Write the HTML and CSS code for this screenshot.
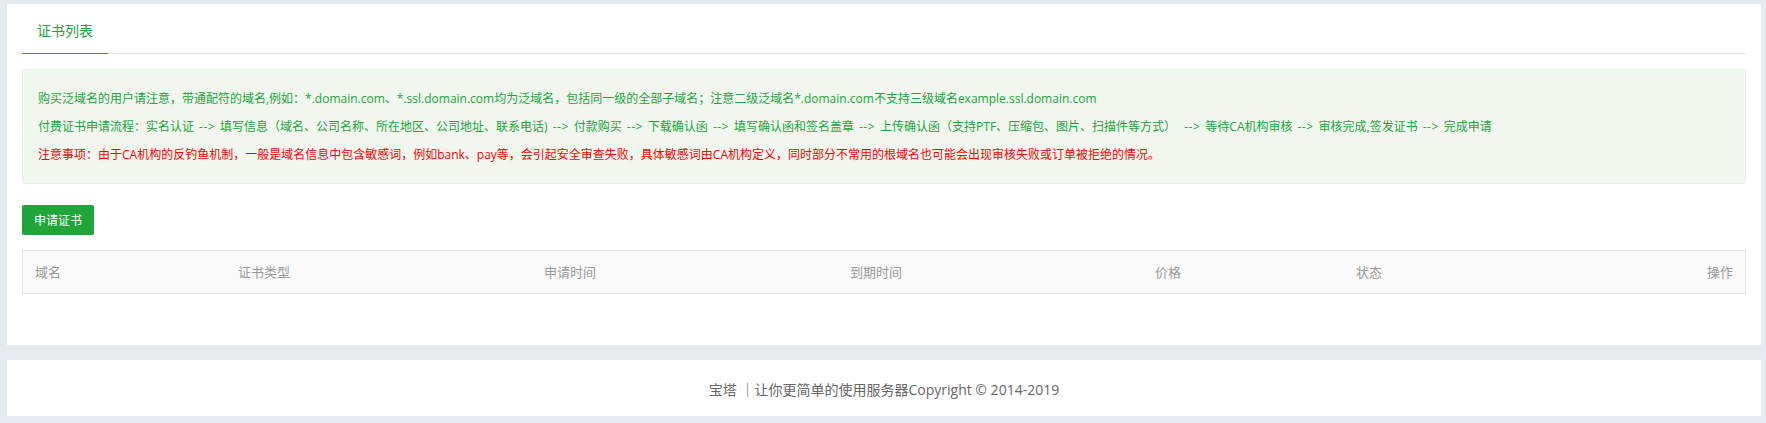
FILE: index.html
```html
<!DOCTYPE html>
<html lang="zh-CN">
<head>
<meta charset="utf-8">
<title>证书列表</title>
<link rel="stylesheet" href="styles.css">
</head>
<body>
<div class="page">
  <div class="panel">
    <div class="tabs">
      <div class="tab active">证书列表</div>
    </div>
    <div class="tips">
      <p class="ok">购买泛域名的用户请注意，带通配符的域名,例如：*.domain.com、*.ssl.domain.com均为泛域名，包括同一级的全部子域名；注意二级泛域名*.domain.com不支持三级域名example.ssl.domain.com</p>
      <p class="ok">付费证书申请流程：实名认证<span class="arr">--&gt;</span>填写信息（域名、公司名称、所在地区、公司地址、联系电话)<span class="arr">--&gt;</span>付款购买<span class="arr">--&gt;</span>下载确认函<span class="arr">--&gt;</span>填写确认函和签名盖章<span class="arr">--&gt;</span>上传确认函（支持PTF、压缩包、图片、扫描件等方式） <span class="arr">--&gt;</span>等待CA机构审核<span class="arr">--&gt;</span>审核完成,签发证书<span class="arr">--&gt;</span>完成申请</p>
      <p class="warn">注意事项：由于CA机构的反钓鱼机制，一般是域名信息中包含敏感词，例如bank、pay等，会引起安全审查失败，具体敏感词由CA机构定义，同时部分不常用的根域名也可能会出现审核失败或订单被拒绝的情况。</p>
    </div>
    <button class="btn" type="button">申请证书</button>
    <div class="table">
      <div class="thead">
        <div class="th">域名</div>
        <div class="th">证书类型</div>
        <div class="th">申请时间</div>
        <div class="th">到期时间</div>
        <div class="th">价格</div>
        <div class="th">状态</div>
        <div class="th right">操作</div>
      </div>
    </div>
  </div>
  <div class="footer">宝塔 ｜让你更简单的使用服务器Copyright © 2014-2019</div>
</div>
</body>
</html>
```
FILE: styles.css
```css
html, body {
  margin: 0;
  padding: 0;
  background: #e7eaee;
}
body {
  font-family: "Open Sans", "Noto Sans CJK SC", sans-serif;
  font-size: 12px;
  color: #666;
}
.page {
  padding: 4px 5px 7px 7px;
}
.panel {
  background: #fff;
  height: 341px;
  box-sizing: border-box;
  padding: 0 15px;
}
.tabs {
  display: flex;
  height: 50px;
  box-sizing: border-box;
  border-bottom: 1px solid #e6e6e6;
}
.tab {
  height: 50px;
  box-sizing: border-box;
  padding: 5px 15px 0;
  line-height: 44px;
  font-size: 14px;
  color: #20a53a;
  border-bottom: 1px solid #20a53a;
  margin-bottom: -1px;
}
.tips {
  margin-top: 15px;
  background: #f1f7ef;
  border: 1px solid #e8f0e6;
  border-radius: 3px;
  padding: 15px 15px 14px;
}
.tips p {
  margin: 0;
  line-height: 28px;
  white-space: nowrap;
}
.tips .ok { color: #20a53a; }
.tips .warn { color: #ff0000; }
.arr {
  padding: 0 5px;
  letter-spacing: 0.5px;
}
.btn {
  display: block;
  margin-top: 21px;
  height: 30px;
  padding: 1px 12px 0;
  border: 0;
  border-radius: 2px;
  background: #20a53a;
  color: #fff;
  font-family: inherit;
  font-size: 12px;
  line-height: 29px;
}
.table {
  margin-top: 15px;
  border: 1px solid #e4e7ec;
}
.thead {
  display: grid;
  grid-template-columns: 203px 306px 306px 305px 201px 1fr auto;
  background: #fafafa;
  height: 42px;
}
.th {
  padding: 1px 12px 0;
  line-height: 41px;
  font-size: 13px;
  color: #999;
}
.th.right {
  text-align: right;
}
.footer {
  margin-top: 15px;
  height: 56px;
  box-sizing: border-box;
  padding-top: 3px;
  line-height: 53px;
  background: #fff;
  text-align: center;
  font-size: 14px;
  color: #666;
}
```
